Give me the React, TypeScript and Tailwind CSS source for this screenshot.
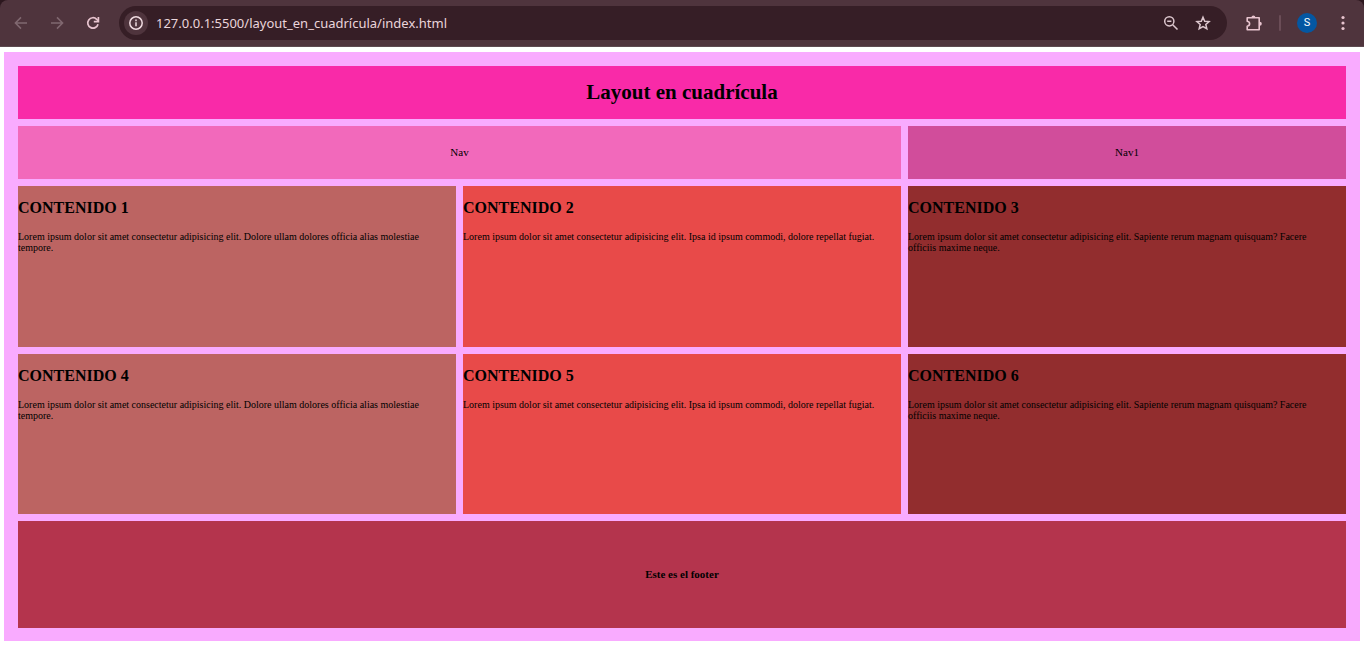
import type { ReactNode } from "react";

const lorem = {
  a: [
    "Lorem ipsum dolor sit amet consectetur adipisicing elit. Dolore ullam dolores officia alias molestiae",
    "tempore.",
  ],
  b: ["Lorem ipsum dolor sit amet consectetur adipisicing elit. Ipsa id ipsum commodi, dolore repellat fugiat."],
  c: [
    "Lorem ipsum dolor sit amet consectetur adipisicing elit. Sapiente rerum magnam quisquam? Facere",
    "officiis maxime neque.",
  ],
};

const cards = [
  { title: "CONTENIDO 1", lines: lorem.a, color: "bg-[#bc6462]" },
  { title: "CONTENIDO 2", lines: lorem.b, color: "bg-[#e84a49]" },
  { title: "CONTENIDO 3", lines: lorem.c, color: "bg-[#922d2e]" },
  { title: "CONTENIDO 4", lines: lorem.a, color: "bg-[#bc6462]" },
  { title: "CONTENIDO 5", lines: lorem.b, color: "bg-[#e84a49]" },
  { title: "CONTENIDO 6", lines: lorem.c, color: "bg-[#922d2e]" },
];

function IconButton({ label, className = "", children }: { label: string; className?: string; children: ReactNode }) {
  return (
    <button type="button" aria-label={label} className={`flex size-6 shrink-0 items-center justify-center ${className}`}>
      {children}
    </button>
  );
}

function Stroke({ children, width = 1.5 }: { children: ReactNode; width?: number }) {
  return (
    <svg viewBox="0 0 16 16" className="size-4" fill="none" stroke="currentColor" strokeWidth={width} aria-hidden="true">
      {children}
    </svg>
  );
}

function Toolbar() {
  return (
    <div className="bg-[#2c171e]">
      <div className="flex h-[47px] items-center rounded-t-lg border-b border-[#5d4a50] bg-[#4f343d] pr-[9px] pl-[9px] text-[#e8c4cf]">
        <IconButton label="Atrás" className="text-[#806870]">
          <Stroke>
            <path d="M14 8H2.8M8 2.4 2.4 8 8 13.6" />
          </Stroke>
        </IconButton>
        <IconButton label="Adelante" className="ml-3 text-[#806870]">
          <Stroke>
            <path d="M2 8h11.2M8 2.4 13.6 8 8 13.6" />
          </Stroke>
        </IconButton>
        <IconButton label="Recargar" className="ml-3">
          <Stroke width={1.7}>
            <path d="M13 9.2A5.2 5.2 0 1 1 11.7 4.3L13.2 6" />
            <path d="M13.4 2v4.7H8.8" />
          </Stroke>
        </IconButton>
        <div className="ml-[14px] flex h-[34px] min-w-0 flex-1 items-center rounded-full bg-[#361e26] pr-3 pl-[5px]">
          <IconButton label="Información del sitio" className="rounded-full bg-[#4f343d] text-[#f0dbe1]">
            <Stroke>
              <circle cx="8" cy="8" r="6.2" />
              <path d="M8 7.2v4M8 4.5v1.7" />
            </Stroke>
          </IconButton>
          <input
            aria-label="Dirección"
            defaultValue="127.0.0.1:5500/layout_en_cuadrícula/index.html"
            className="ml-2 min-w-0 flex-1 bg-transparent font-['Noto_Sans',sans-serif] text-[13px] leading-5 text-[#ead5db] outline-none"
          />
          <IconButton label="Zoom" className="text-[#dcc6cd]">
            <Stroke>
              <circle cx="6.3" cy="6.3" r="4.6" />
              <path d="M4.2 6.3h4.2M9.7 9.7l4.8 4.8" />
            </Stroke>
          </IconButton>
          <IconButton label="Marcador" className="ml-2 text-[#dcc6cd]">
            <Stroke width={1.5}>
              <path d="m8 2.2 1.7 4 4.4.4-3.3 2.9 1 4.2L8 11.5l-3.8 2.2 1-4.2L1.9 6.6l4.4-.4z" />
            </Stroke>
          </IconButton>
        </div>
        <IconButton label="Extensiones" className="ml-[15px]">
          <svg viewBox="0 0 16 16" className="size-4" aria-hidden="true">
            <path
              d="M1.2 2.8h12v12H1.2v-3.5c3.2-.6 3.2-4.4 0-5z"
              fill="none"
              stroke="currentColor"
              strokeWidth="1.6"
              strokeLinejoin="round"
            />
            <path d="M5.4 2.4a2 2 0 0 1 4 0zM13.8 6.8a2 2 0 0 1 0 4z" fill="currentColor" />
          </svg>
        </IconButton>
        <div className="ml-[13px] h-4 w-[2px] rounded-full bg-[#6b4d57]" />
        <button
          type="button"
          aria-label="Perfil"
          className="ml-4 flex size-5 shrink-0 items-center justify-center rounded-full bg-[#0457a2] font-[Roboto,sans-serif] text-[11px] text-white"
        >
          S
        </button>
        <IconButton label="Menú" className="ml-[14px]">
          <svg viewBox="0 0 16 16" className="size-4" fill="currentColor" aria-hidden="true">
            <circle cx="8" cy="2.5" r="1.6" />
            <circle cx="8" cy="8" r="1.6" />
            <circle cx="8" cy="13.5" r="1.6" />
          </svg>
        </IconButton>
      </div>
    </div>
  );
}

export default function App() {
  return (
    <div className="bg-white">
      <Toolbar />
      <div className="mx-1 mt-[5px] grid grid-cols-3 grid-rows-[53px_53px_161px_160px_107px] gap-[7px] bg-[#f9abff] px-[14px] pt-[14px] pb-[13px] font-['Liberation_Serif',serif] text-[11px] leading-[11px] text-black">
        <header className="col-span-3 flex items-center justify-center bg-[#f92aa8] pb-[2px]">
          <h1 className="text-[21px] leading-6 font-bold">Layout en cuadrícula</h1>
        </header>
        <nav className="col-span-2 flex items-center justify-center bg-[#f269bb]">Nav</nav>
        <nav className="flex items-center justify-center bg-[#d14d9b]">Nav1</nav>
        {cards.map((card) => (
          <section key={card.title} className={`min-w-0 pt-3 ${card.color}`}>
            <h2 className="text-base leading-5 font-bold">{card.title}</h2>
            <p className="mt-[13px] text-[10px] leading-[11px]">
              {card.lines.map((line) => (
                <span key={line} className="block">
                  {line}
                </span>
              ))}
            </p>
          </section>
        ))}
        <footer className="col-span-3 flex items-center justify-center bg-[#b4344d] font-bold">Este es el footer</footer>
      </div>
    </div>
  );
}
